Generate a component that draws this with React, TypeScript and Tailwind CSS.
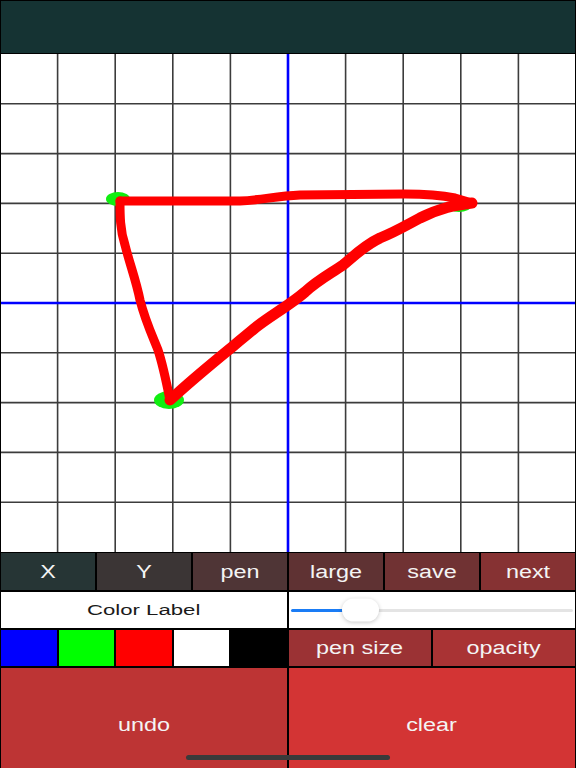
import React from "react";

const font = { fontFamily: '"Liberation Sans", Arial, sans-serif' };

const topButtons = [
  { label: "X", bg: "bg-[#263535]" },
  { label: "Y", bg: "bg-[#3b3535]" },
  { label: "pen", bg: "bg-[#4f3536]" },
  { label: "large", bg: "bg-[#5f3233]" },
  { label: "save", bg: "bg-[#703233]" },
  { label: "next", bg: "bg-[#863233]" },
];

const swatches = ["bg-[#0000ff]", "bg-[#00ff00]", "bg-[#ff0000]", "bg-white", "bg-black"];

const cols = [1, 2, 3, 4, 5, 6, 7, 8, 9];

const Label = ({ children }: { children: React.ReactNode }) => (
  <span className="inline-block scale-x-[1.3] text-[18px] leading-none text-[#f4f4f4]">{children}</span>
);

// drawing canvas: grid + what the user drew
const Canvas = () => {
  const top = 54;
  const ch = 49.8;
  const cw = 57.6;
  return (
    <svg className="block h-[498px] w-full bg-white" viewBox="1 54 574 498" preserveAspectRatio="none">
      {cols.map((k) =>
        k === 5 ? null : <line key={"v" + k} x1={k * cw} y1={top} x2={k * cw} y2={top + 498} stroke="#3c3c3c" strokeWidth="1.6" />
      )}
      {cols.map((k) =>
        k === 5 ? null : <line key={"h" + k} x1={0} y1={top + k * ch} x2={576} y2={top + k * ch} stroke="#3c3c3c" strokeWidth="1.6" />
      )}
      <line x1={288} y1={top} x2={288} y2={top + 498} stroke="#0000ff" strokeWidth="2.6" />
      <line x1={0} y1={303} x2={576} y2={303} stroke="#0000ff" strokeWidth="2.6" />

      <ellipse cx="118" cy="199" rx="12" ry="7" fill="#11ee11" />
      <ellipse cx="169" cy="400" rx="15" ry="9" fill="#11ee11" />
      <ellipse cx="459" cy="206" rx="12" ry="6" fill="#11ee11" />

      <g fill="none" stroke="#ff0000" strokeLinejoin="round" strokeLinecap="round">
        <path
          strokeWidth="9"
          d="M120 201 L240 201 C262 200 276 196 300 195 L405 194 C425 194 440 195 455 198 L472 203"
        />
        <path
          strokeWidth="11"
          d="M472 203 C455 205 440 208 420 218 C405 226 395 232 380 238 C365 245 355 255 343 265
             C330 274 318 280 305 292 C290 305 270 316 255 328 C235 345 200 372 170 400"
        />
        <path
          strokeWidth="9"
          d="M170 400 C167 385 163 365 158 350 C152 335 145 320 140 300 C136 280 130 265 125 245 C120 230 120 215 120 201"
        />
      </g>
    </svg>
  );
};

export default function App() {
  return (
    <div className="relative flex h-[768px] w-[576px] flex-col bg-black px-[1px] pt-[1px]" style={font}>
      <div className="h-[52px] bg-[#153333]" />

      <div className="mt-[1px]">
        <Canvas />
      </div>

      <div className="mt-[1px] grid h-[37px] grid-cols-6 gap-[2px]">
        {topButtons.map((b) => (
          <div key={b.label} className={`flex items-center justify-center ${b.bg}`}>
            <Label>{b.label}</Label>
          </div>
        ))}
      </div>

      <div className="mt-[2px] grid h-[36px] grid-cols-2 gap-[2px]">
        <div className="flex items-center justify-center bg-white">
          <span className="inline-block scale-x-[1.43] text-[15.5px] leading-none text-[#1a1a1a]">Color Label</span>
        </div>
        <div className="flex items-center bg-white px-[2px]">
          <div className="relative flex h-[3px] w-full items-center">
            <div className="h-[3px] w-[52px] rounded-l-full bg-[#1a7cf5]" />
            <div className="h-[3px] flex-1 rounded-r-full bg-[#e4e4e4]" />
            <div className="absolute left-[51px] top-1/2 h-[23px] w-[37px] -translate-y-1/2 rounded-full bg-white shadow-[0_1px_4px_rgba(0,0,0,0.22)]" />
          </div>
        </div>
      </div>

      <div className="mt-[2px] grid h-[36px] grid-cols-2 gap-[2px]">
        <div className="grid grid-cols-5 gap-[2px]">
          {swatches.map((s) => (
            <div key={s} className={s} />
          ))}
        </div>
        <div className="grid grid-cols-2 gap-[2px]">
          <div className="flex items-center justify-center bg-[#9b3234]">
            <Label>pen size</Label>
          </div>
          <div className="flex items-center justify-center bg-[#a93334]">
            <Label>opacity</Label>
          </div>
        </div>
      </div>

      <div className="mt-[2px] grid flex-1 grid-cols-2 gap-[2px]">
        <div className="flex items-center justify-center bg-[#bd3434] pt-[13px]">
          <Label>undo</Label>
        </div>
        <div className="flex items-center justify-center bg-[#d33434] pt-[13px]">
          <Label>clear</Label>
        </div>
      </div>

      <div className="absolute bottom-[8px] left-[186px] h-[5px] w-[204px] rounded-full bg-[#3a3a3a]" />
    </div>
  );
}
